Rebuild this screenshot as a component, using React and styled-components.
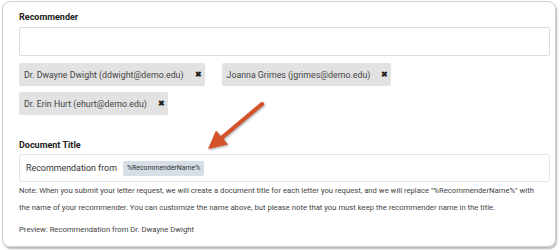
import React from "react";
import styled, { createGlobalStyle } from "styled-components";

const GlobalStyle = createGlobalStyle`
  html, body {
    margin: 0;
    padding: 0;
    background: #fff;
    font-family: Roboto, "Liberation Sans", Arial, sans-serif;
  }
`;

const Page = styled.div`
  position: relative;
  width: 560px;
  height: 250px;
  padding: 1px 0 0 2px;
  box-sizing: border-box;
`;

const Card = styled.div`
  width: 554px;
  height: 246px;
  box-sizing: border-box;
  border: 1px solid #cfcfcf;
  border-radius: 8px;
  box-shadow: 1px 2px 2px rgba(0, 0, 0, 0.28);
  padding: 9px 5px 0 16px;
  display: flex;
  flex-direction: column;
`;

const Label = styled.div`
  font-size: 9px;
  font-weight: 700;
  line-height: 12px;
  color: #222;
  margin-top: ${(p) => p.$top || 0}px;
`;

const Input = styled.div`
  margin-top: 4px;
  width: 531px;
  height: 29px;
  box-sizing: border-box;
  border: 1px solid #dcdcdc;
  border-radius: 2px;
`;

const Chips = styled.div`
  margin-top: 7px;
  display: flex;
  flex-wrap: wrap;
  row-gap: 6px;
  column-gap: 17px;
  width: 420px;
`;

const Chip = styled.div`
  height: 23px;
  display: flex;
  align-items: center;
  gap: 11px;
  padding: 0 3px 0 5px;
  background: #e2e2e2;
  border-radius: 2px;
  font-size: 8.8px;
  color: #444;
`;

const Remove = styled.span`
  font-size: 8px;
  font-weight: 700;
  color: #222;
  width: 7px;
`;

const TitleBox = styled.div`
  margin-top: 3px;
  width: 531px;
  height: 28px;
  box-sizing: border-box;
  border: 1px solid #e4e4e4;
  border-radius: 2px;
  display: flex;
  align-items: center;
  gap: 6px;
  padding-left: 6px;
  font-size: 8.9px;
  color: #333;
`;

const Tag = styled.span`
  height: 15px;
  display: inline-flex;
  align-items: center;
  padding: 0 4px;
  background: #d6dee6;
  border-radius: 2px;
  font-size: 6.9px;
  color: #333;
`;

const Note = styled.p`
  margin: ${(p) => p.$top || 0}px 0 0;
  max-width: 524px;
  font-size: 7.7px;
  line-height: 17px;
  color: #444;
`;

const Arrow = styled.svg`
  position: absolute;
  left: 0;
  top: 0;
  pointer-events: none;
  filter: drop-shadow(1px 1px 1px rgba(0, 0, 0, 0.35));
`;

const recommenders = [
  "Dr. Dwayne Dwight (ddwight@demo.edu)",
  "Joanna Grimes (jgrimes@demo.edu)",
  "Dr. Erin Hurt (ehurt@demo.edu)",
];

export default function App() {
  return (
    <Page>
      <GlobalStyle />
      <Card>
        <Label>Recommender</Label>
        <Input />
        <Chips>
          {recommenders.map((r) => (
            <Chip key={r}>
              <span>{r}</span>
              <Remove>✖</Remove>
            </Chip>
          ))}
        </Chips>
        <Label $top={24}>Document Title</Label>
        <TitleBox>
          <span>Recommendation from</span>
          <Tag>%RecommenderName%</Tag>
        </TitleBox>
        <Note>
          Note: When you submit your letter request, we will create a document title for each letter you request, and we will replace "%RecommenderName%" with the name of your recommender. You can customize the name above, but please note that you must keep the recommender name in the title.
        </Note>
        <Note $top={5}>Preview: Recommendation from Dr. Dwayne Dwight</Note>
      </Card>
      <Arrow width="560" height="250" viewBox="0 0 560 250">
        <line x1="262" y1="104" x2="222" y2="137.5" stroke="#d4512a" strokeWidth="4" strokeLinecap="round" />
        <polygon points="208,149 228,144.5 216,130.5" fill="#d4512a" />
      </Arrow>
    </Page>
  );
}
